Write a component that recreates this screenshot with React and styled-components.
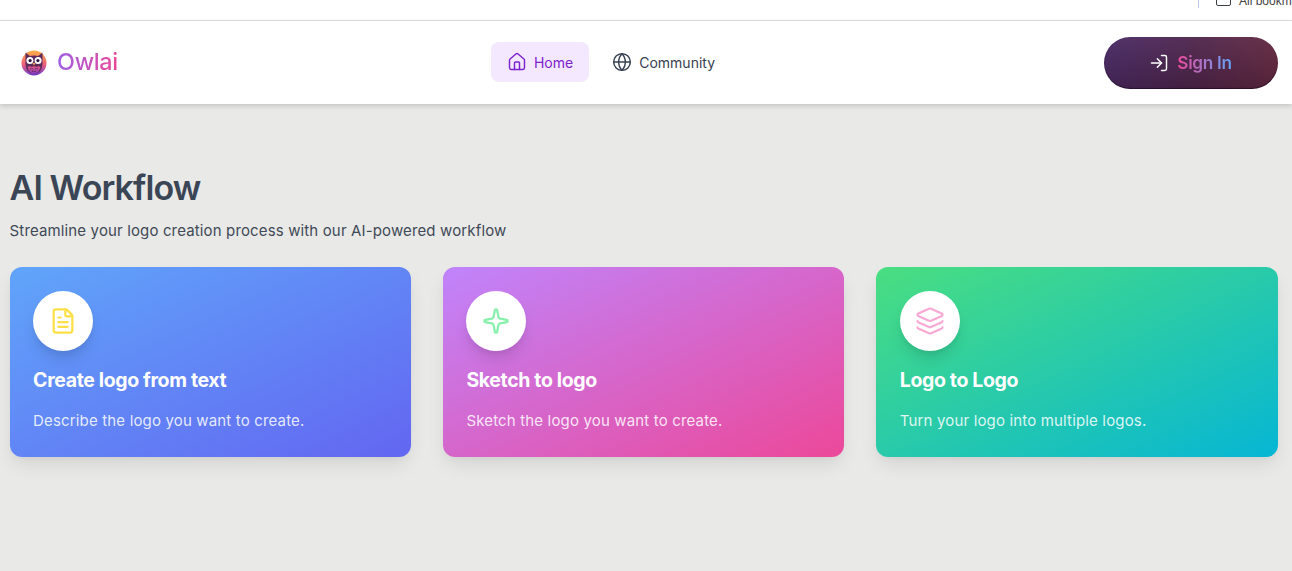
import React from 'react';
import styled, { createGlobalStyle } from 'styled-components';
import { House, Globe, LogIn, FileText, Layers, Sparkle } from 'lucide-react';

const GlobalStyle = createGlobalStyle`
  html, body {
    margin: 0;
    padding: 0;
    height: 100%;
    overflow: hidden;
    background: #e9e9e7;
  }
  * {
    box-sizing: border-box;
  }
  body {
    font-family: 'Inter', 'Open Sans', sans-serif;
  }
`;

const Page = styled.div`
  min-height: 571px;
  background: #e9e9e7;
`;

const BrowserStrip = styled.div`
  height: 21px;
  background: #fff;
  border-bottom: 1px solid #dedfe1;
  display: flex;
  justify-content: flex-end;
  align-items: flex-end;
  overflow: hidden;
`;

const Bookmarks = styled.div`
  width: 94px;
  height: 8px;
  display: flex;
  overflow: hidden;
  border-left: 1px solid #bcd0ea;
  margin-bottom: 12px;
  padding-left: 17px;
  gap: 8px;
  font-family: 'Liberation Sans', sans-serif;
  font-size: 12px;
  color: #444;
  white-space: nowrap;
`;

const FolderGlyph = styled.span`
  flex: 0 0 15px;
  height: 14px;
  margin-top: -8px;
  border: 1.5px solid #3c4043;
  border-radius: 2px;
`;

const BookmarkLabel = styled.span`
  line-height: 11px;
  margin-top: -4px;
`;

const Header = styled.header`
  height: 83px;
  background: #fff;
  display: flex;
  align-items: center;
  justify-content: space-between;
  padding: 0 14px 0 21px;
  box-shadow: 0 2px 5px rgba(0, 0, 0, 0.16);
  position: relative;
`;

const Brand = styled.div`
  display: flex;
  align-items: center;
  gap: 10px;
  width: 97px;
`;

const BrandName = styled.span`
  font-size: 23.4px;
  font-weight: 500;
  letter-spacing: -0.3px;
  padding-bottom: 2px;
  background: linear-gradient(90deg, #9d5fe6, #ec4899);
  -webkit-background-clip: text;
  background-clip: text;
  color: transparent;
`;

const Nav = styled.nav`
  display: flex;
  align-items: center;
  gap: 9px;
  margin-top: -1px;
`;

const NavItem = styled.a`
  height: 40px;
  display: flex;
  align-items: center;
  gap: 7px;
  padding: 0 16px 0 ${p => (p.$active ? '16px' : '14px')};
  border-radius: 8px;
  background: ${p => (p.$active ? '#f3e8ff' : 'transparent')};
  color: ${p => (p.$active ? '#7e22ce' : '#374151')};
  font-size: 14px;
`;

const SignInButton = styled.button`
  width: 174px;
  height: 52px;
  border: 0;
  border-radius: 26px;
  display: flex;
  align-items: center;
  justify-content: center;
  gap: 8px;
  padding: 0 1px 0 0;
  color: #fff;
  background:
    linear-gradient(to bottom, rgba(255, 255, 255, 0.03), rgba(20, 0, 20, 0.24)),
    linear-gradient(100deg, #4c2d68 0%, #51294f 50%, #682c42 100%);
  box-shadow: inset 0 -1px 1px rgba(20, 5, 25, 0.6);
`;

const SignInText = styled.span`
  font-family: 'Inter', sans-serif;
  font-size: 17.2px;
  font-weight: 600;
  letter-spacing: -0.3px;
  background: linear-gradient(90deg, #ec4899, #60a5fa);
  -webkit-background-clip: text;
  background-clip: text;
  color: transparent;
`;

const Main = styled.main`
  padding: 62px 14.4px 0 9.6px;
`;

const Title = styled.h1`
  margin: 0;
  font-size: 34px;
  line-height: 44px;
  font-weight: 600;
  letter-spacing: -0.9px;
  color: #3a4556;
`;

const Subtitle = styled.p`
  margin: 10px 0 0;
  font-size: 15px;
  line-height: 22px;
  letter-spacing: 0.14px;
  color: #414a57;
`;

const CardGrid = styled.div`
  display: grid;
  grid-template-columns: repeat(3, 1fr);
  gap: 32px;
  margin-top: 24.5px;
`;

const Card = styled.article`
  height: 190.5px;
  border-radius: 12px;
  padding: 24px 23.5px;
  color: #fff;
  background: linear-gradient(to bottom right, ${p => p.$from}, ${p => p.$to});
  box-shadow: 0 10px 20px -3px rgba(0, 0, 0, 0.09), 0 4px 8px -2px rgba(0, 0, 0, 0.04);
`;

const IconCircle = styled.div`
  width: 60px;
  height: 60px;
  border-radius: 50%;
  background: #fff;
  display: flex;
  align-items: center;
  justify-content: center;
  color: ${p => p.$color};
  box-shadow: 0 10px 15px -3px rgba(0, 0, 0, 0.12), 0 4px 6px -2px rgba(0, 0, 0, 0.06);
`;

const CardTitle = styled.h2`
  margin: 16.5px 0 0;
  font-size: 19.5px;
  line-height: 26px;
  font-weight: 700;
  letter-spacing: -0.36px;
`;

const CardText = styled.p`
  margin: 17px 0 0;
  font-size: 15px;
  line-height: 22px;
  letter-spacing: 0.16px;
  color: rgba(255, 255, 255, 0.85);
`;

const OwlLogo = () => (
  <svg width="26" height="26" viewBox="0 0 26 26">
    <defs>
      <linearGradient id="owlBg" x1="0" y1="0" x2="0" y2="1">
        <stop offset="0" stopColor="#fdb045" />
        <stop offset="0.55" stopColor="#ef5f78" />
        <stop offset="1" stopColor="#6d3bd1" />
      </linearGradient>
      <linearGradient id="owlChest" x1="0" y1="0" x2="0" y2="1">
        <stop offset="0" stopColor="#e8567f" />
        <stop offset="1" stopColor="#7a3bc8" />
      </linearGradient>
    </defs>
    <circle cx="13" cy="13" r="12.5" fill="url(#owlBg)" />
    <path d="M4.5 2.5 L8.8 6 Q13 4.8 17.2 6 L21.5 2.5 L21.5 14 Q21 23 13 24.5 Q5 23 4.5 14 Z" fill="#5d2a5c" />
    <circle cx="8.9" cy="10.6" r="3.5" fill="#fff" />
    <circle cx="17.1" cy="10.6" r="3.5" fill="#fff" />
    <circle cx="9.1" cy="10.6" r="1.6" fill="#2b1740" />
    <circle cx="16.9" cy="10.6" r="1.6" fill="#2b1740" />
    <path d="M11.6 13 L14.4 13 L13 15.4 Z" fill="#fdb045" />
    <path d="M6.5 17 Q8.5 15.5 10.5 17 Q13 15.3 15.5 17 Q17.5 15.5 19.5 17 Q18 23 13 24.5 Q8 23 6.5 17 Z" fill="url(#owlChest)" />
    <path d="M9 19 Q10.5 18 12 19 M14 19 Q15.5 18 17 19 M11 21.5 Q13 20.5 15 21.5" fill="none" stroke="#5d2a5c" strokeWidth="0.8" />
  </svg>
);

const cards = [
  {
    title: 'Create logo from text',
    text: 'Describe the logo you want to create.',
    from: '#60a5fa',
    to: '#6366f1',
    color: '#fde047',
    icon: <FileText size={28} strokeWidth={1.9} />,
  },
  {
    title: 'Sketch to logo',
    text: 'Sketch the logo you want to create.',
    from: '#c084fc',
    to: '#ec4899',
    color: '#86efac',
    icon: <Sparkle size={28} strokeWidth={1.9} />,
  },
  {
    title: 'Logo to Logo',
    text: 'Turn your logo into multiple logos.',
    from: '#4ade80',
    to: '#06b6d4',
    color: '#f9a8d4',
    icon: <Layers size={30} strokeWidth={1.75} />,
  },
];

const App = () => (
  <Page>
    <GlobalStyle />
    <BrowserStrip>
      <Bookmarks>
        <FolderGlyph />
        <BookmarkLabel>All bookmarks</BookmarkLabel>
      </Bookmarks>
    </BrowserStrip>
    <Header>
      <Brand>
        <OwlLogo />
        <BrandName>Owlai</BrandName>
      </Brand>
      <Nav>
        <NavItem $active>
          <House size={20} strokeWidth={1.75} />
          Home
        </NavItem>
        <NavItem>
          <Globe size={20} strokeWidth={1.75} />
          Community
        </NavItem>
      </Nav>
      <SignInButton>
        <LogIn size={20} strokeWidth={1.75} />
        <SignInText>Sign In</SignInText>
      </SignInButton>
    </Header>
    <Main>
      <Title>AI Workflow</Title>
      <Subtitle>Streamline your logo creation process with our AI-powered workflow</Subtitle>
      <CardGrid>
        {cards.map(card => (
          <Card key={card.title} $from={card.from} $to={card.to}>
            <IconCircle $color={card.color}>{card.icon}</IconCircle>
            <CardTitle>{card.title}</CardTitle>
            <CardText>{card.text}</CardText>
          </Card>
        ))}
      </CardGrid>
    </Main>
  </Page>
);

export default App;
